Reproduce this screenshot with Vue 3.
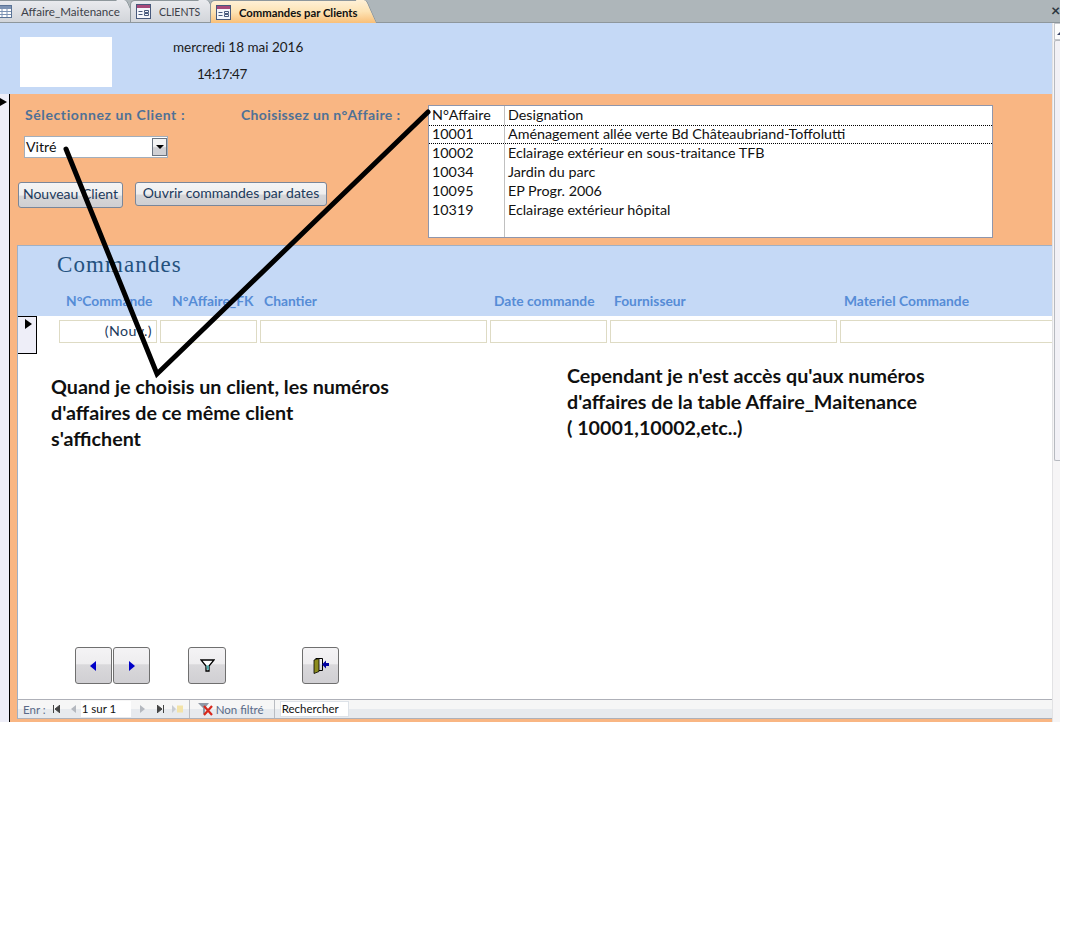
<template>
  <div class="window">
    <div class="tabs">
      <div v-for="tab in tabs" :key="tab.name" class="tab" :class="tab.cls">
        <svg v-if="tab.grid" class="tab-icon" width="15" height="13" viewBox="0 0 15 13">
          <rect x="0.5" y="0.5" width="14" height="12" fill="#fff" stroke="#5a7396" />
          <rect x="1" y="1" width="13" height="3" fill="#7d93b4" />
          <path d="M1 6.5h13M1 9.500h13M5 4v8M10 4v8" stroke="#7d93b4" fill="none" />
        </svg>
        <svg v-else class="tab-icon" width="15" height="15" viewBox="0 0 15 15">
          <rect x="0.5" y="0.5" width="14" height="14" fill="#f4f6fb" stroke="#47597c" />
          <rect x="1" y="1" width="13" height="3" fill="#a8497a" />
          <path d="M2.500 7.500h4M2.500 10.500h4" stroke="#47597c" fill="none" />
          <path d="M8.500 6.500h4v2h-4zM8.500 9.500h4v2h-4z" stroke="#47597c" fill="none" />
        </svg>
        <span>{{ tab.name }}</span>
      </div>
      <div class="tab-close">×</div>
    </div>

    <div class="body">
      <div class="content">
        <header class="page-head">
          <div class="logo"></div>
          <div class="stamp">
            <div class="stamp-date">mercredi 18 mai 2016</div>
            <div class="stamp-time">14:17:47</div>
          </div>
        </header>

        <div class="detail">
          <div class="record-strip"><span class="strip-arrow"></span></div>
          <div class="orange">
            <section class="filters">
              <div class="filters-left">
                <div class="field-labels">
                  <label class="field-label">Sélectionnez un Client :</label>
                </div>
                <div class="combo">
                  <span>Vitré</span>
                  <span class="combo-btn"><i></i></span>
                </div>
                <div class="actions">
                  <button class="btn btn-new">Nouveau Client</button>
                  <button class="btn btn-open">Ouvrir commandes par dates</button>
                </div>
              </div>
              <label class="field-label second">Choisissez un n°Affaire :</label>
              <div class="listbox">
                <div class="list-row">
                  <span class="col-num">N°Affaire</span>
                  <span>Designation</span>
                </div>
                <div
                  v-for="row in affaires"
                  :key="row.num"
                  class="list-row"
                  :class="{ selected: row.num === '10001' }"
                >
                  <span class="col-num">{{ row.num }}</span>
                  <span>{{ row.label }}</span>
                </div>
                <div class="list-fill"><span class="col-num"></span></div>
              </div>
            </section>

            <section class="subform">
              <div class="sub-head">
                <h2>Commandes</h2>
                <div class="sub-cols labels">
                  <span class="right pad-a">N°Commande</span>
                  <span class="right pad-b">N°Affaire_FK</span>
                  <span>Chantier</span>
                  <span>Date commande</span>
                  <span>Fournisseur</span>
                  <span>Materiel Commande</span>
                </div>
              </div>
              <div class="sub-row">
                <div class="selector"><span class="strip-arrow"></span></div>
                <div class="sub-cols cells">
                  <div class="cell new">(Nouv.)</div>
                  <div class="cell"></div>
                  <div class="cell"></div>
                  <div class="cell"></div>
                  <div class="cell"></div>
                  <div class="cell"></div>
                </div>
              </div>

              <div class="notes">
                <p class="note note-a">Quand je choisis un client, les numéros<br />d'affaires de ce même client<br />s'affichent</p>
                <p class="note note-b">Cependant je n'est accès qu'aux numéros<br />d'affaires de la table Affaire_Maitenance<br />( 10001,10002,etc..)</p>
              </div>

              <div class="tools">
                <button class="tool">
                  <svg width="7" height="10" viewBox="0 0 7 10"><path d="M6 0v10L0 5z" fill="#0000c8" /></svg>
                </button>
                <button class="tool">
                  <svg width="7" height="10" viewBox="0 0 7 10"><path d="M1 0v10l6-5z" fill="#0000c8" /></svg>
                </button>
                <button class="tool filter">
                  <svg width="15" height="13" viewBox="0 0 15 13">
                    <path d="M1 1h13L9 7v5H6V7z" fill="#fff" stroke="#000" stroke-width="1.300" />
                    <path d="M6 6.500h3V11H7.500z" fill="#4fa8a8" />
                  </svg>
                </button>
                <button class="tool exit">
                  <svg width="18" height="18" viewBox="0 0 18 18">
                    <path d="M3.500 1.500h7v12h-7" fill="none" stroke="#000" />
                    <path d="M2 3l5-1.500v13L2 16.500z" fill="#8c8c1e" stroke="#000" stroke-width="0.800" />
                    <path d="M17 6v3h-3v2.500L10 7.500l4-4V6z" fill="#0000a0" />
                  </svg>
                </button>
              </div>

              <div class="nav">
                <span class="nav-label">Enr :</span>
                <svg class="nav-ico first" width="7" height="8" viewBox="0 0 7 8"><path d="M0.500 0v8M7 0v8L2 4z" stroke="#444" stroke-width="1" fill="#444" /></svg>
                <svg class="nav-ico prev" width="5" height="8" viewBox="0 0 5 8"><path d="M5 0v8L0 4z" fill="#b4b8bf" /></svg>
                <span class="nav-input">1 sur 1</span>
                <svg class="nav-ico next" width="5" height="8" viewBox="0 0 5 8"><path d="M0 0v8l5-4z" fill="#b4b8bf" /></svg>
                <svg class="nav-ico last" width="7" height="8" viewBox="0 0 7 8"><path d="M0 0v8l5-4zM6.500 0v8" stroke="#444" stroke-width="1" fill="#444" /></svg>
                <svg class="nav-ico add" width="12" height="8" viewBox="0 0 12 8">
                  <path d="M0 0v8l4-4z" fill="#c8ccd2" />
                  <rect x="5" y="0.500" width="6" height="7" fill="#f3e3a8" />
                </svg>
                <span class="nav-sep"></span>
                <svg class="nav-filter" width="16" height="14" viewBox="0 0 16 14">
                  <path d="M0 1h11L7 6v6H5V6z" fill="#8f98a6" />
                  <path d="M6 4l8 9M14 4l-8 9" stroke="#d8281c" stroke-width="2.200" />
                </svg>
                <span class="nav-text">Non filtré</span>
                <span class="nav-sep"></span>
                <span class="nav-search">Rechercher</span>
              </div>
            </section>
          </div>
        </div>
      </div>
      <div class="scrollbar">
        <div class="scroll-up"><i></i></div>
        <div class="scroll-thumb"></div>
      </div>
    </div>

    <svg class="scribble" width="1068" height="722" viewBox="0 0 1068 722">
      <path d="M66 149 157 374 428 112" fill="none" stroke="#000" stroke-width="5" stroke-linecap="round" />
    </svg>
  </div>
</template>

<script setup>
const tabs = [
  { name: 'Affaire_Maitenance', cls: 'tab-grid', grid: true },
  { name: 'CLIENTS', cls: 'tab-clients' },
  { name: 'Commandes par Clients', cls: 'tab-active' },
]

const affaires = [
  { num: '10001', label: 'Aménagement allée verte Bd Châteaubriand-Toffolutti' },
  { num: '10002', label: 'Eclairage extérieur en sous-traitance TFB' },
  { num: '10034', label: 'Jardin du parc' },
  { num: '10095', label: 'EP Progr. 2006' },
  { num: '10319', label: 'Eclairage extérieur hôpital' },
]
</script>

<style scoped>
.window {
  position: relative;
  width: 1060px;
  height: 722px;
  display: flex;
  flex-direction: column;
  font-family: Lato, "Open Sans", sans-serif;
  font-size: 13px;
  color: #111;
  overflow: hidden;
}

.tabs {
  position: relative;
  flex: none;
  height: 23px;
  display: flex;
  background: #aeb6ba;
  border-bottom: 1px solid #8e979c;
  box-sizing: border-box;
}

.tab {
  position: relative;
  height: 22px;
  display: flex;
  align-items: center;
  box-sizing: border-box;
  color: #3c4048;
  font-size: 11.600px;
  white-space: nowrap;
  background: linear-gradient(#e9eaee, #d2d5da);
  border-top: 1px solid #8e979c;
  border-radius: 0 6px 0 0;
}

.tab::after {
  content: '';
  position: absolute;
  top: -1px;
  right: -6px;
  width: 10px;
  height: 22px;
  background: inherit;
  transform: skewX(24deg);
  border-radius: 0 3px 0 0;
  border-right: 1px solid #8e979c;
}

.tab span {
  position: relative;
  z-index: 2;
}

.tab-icon {
  position: relative;
  z-index: 2;
  flex: none;
}

.tab-grid {
  width: 126px;
}

.tab-grid .tab-icon {
  margin: 0 9px 0 -3px;
}

.tab-clients {
  width: 78px;
  margin-left: 4px;
  padding-left: 5px;
  z-index: 1;
  font-size: 10.500px;
  border-left: 1px solid #8e979c;
  border-radius: 5px 5px 0 0;
}

.tab-clients .tab-icon {
  margin-right: 8px;
}

.tab-active {
  width: 156px;
  height: 23px;
  margin-left: 2px;
  padding-left: 5px;
  z-index: 2;
  color: #101010;
  font-size: 11.300px;
  font-weight: 700;
  background: linear-gradient(#fff0d6 0, #fde3b4 50%, #f9bf78 100%);
  border-left: 1px solid #8e979c;
  border-radius: 5px 5px 0 0;
}

.tab-active::after {
  height: 23px;
}

.tab-active .tab-icon {
  margin-right: 8px;
}

.tab-close {
  position: absolute;
  right: 0;
  top: 1px;
  width: 9px;
  color: #2c3640;
  font-size: 16px;
  line-height: 18px;
  font-weight: 700;
}

.body {
  flex: 1;
  min-height: 0;
  display: flex;
}

.content {
  width: 1052px;
  display: flex;
  flex-direction: column;
}

.page-head {
  flex: none;
  height: 71px;
  display: flex;
  box-sizing: border-box;
  padding: 14px 0 0 20px;
  background: #c5d9f6;
}

.logo {
  width: 92px;
  height: 50px;
  background: #fff;
}

.stamp {
  margin-left: 61px;
  padding-top: 1px;
  font-size: 13.500px;
  line-height: 18px;
  color: #1c1c1c;
}

.stamp-time {
  margin: 9px 0 0 24px;
  letter-spacing: -0.500px;
}

.detail {
  flex: 1;
  min-height: 0;
  display: flex;
}

.record-strip {
  position: relative;
  flex: none;
  width: 9px;
  background: #eeeef8;
  border-right: 1px solid #000;
}

.record-strip .strip-arrow {
  position: absolute;
  left: 0;
  top: 4px;
  border-width: 4px 0 4px 7px;
}

.strip-arrow {
  display: block;
  width: 0;
  height: 0;
  border-style: solid;
  border-color: transparent transparent transparent #000;
  border-width: 5px 0 5px 7px;
}

.orange {
  flex: 1;
  min-width: 0;
  display: flex;
  flex-direction: column;
  background: #f9b683;
  padding-left: 7px;
}

.filters {
  position: relative;
  flex: none;
  height: 151px;
  display: flex;
}

.filters-left {
  width: 216px;
  flex: none;
  padding-top: 12px;
  box-sizing: border-box;
}

.field-labels {
  padding-left: 8px;
}

.field-label {
  font-size: 14px;
  line-height: 18px;
  font-weight: 700;
  color: #4f7196;
  white-space: nowrap;
  letter-spacing: 0.600px;
}

.field-label.second {
  margin: 12px 0 0 8px;
  width: 187px;
  flex: none;
  letter-spacing: 0.350px;
}

.combo {
  position: relative;
  width: 144px;
  height: 22px;
  margin: 12px 0 0 7px;
  box-sizing: border-box;
  border: 1px solid #a3aebb;
  background: #fff;
  padding-left: 1px;
  font-size: 14.200px;
  line-height: 20px;
}

.combo-btn {
  position: absolute;
  top: 1px;
  right: 0;
  width: 15px;
  height: 18px;
  box-sizing: border-box;
  border: 1px solid #6b7480;
  background: linear-gradient(#f4f4f4 45%, #d0d0d4 55%);
  display: flex;
  align-items: center;
  justify-content: center;
}

.combo-btn i {
  width: 0;
  height: 0;
  border-style: solid;
  border-width: 4px 4px 0 4px;
  border-color: #000 transparent transparent transparent;
}

.actions {
  display: flex;
  align-items: flex-start;
  gap: 12px;
  margin-top: 24px;
  white-space: nowrap;
  padding-left: 1px;
}

.btn {
  flex: none;
  height: 24px;
  padding: 0 0 3px;
  box-sizing: border-box;
  border: 1px solid #7a8699;
  border-radius: 3px;
  background: linear-gradient(#f4f4f5 0, #eeeeee 50%, #d6d6d8 55%, #cfcfd2 100%);
  font-family: inherit;
  font-size: 14px;
  color: #1c3a5c;
}

.btn-new {
  width: 105px;
  height: 26px;
}

.btn-open {
  width: 192px;
}

.listbox {
  flex: none;
  width: 565px;
  height: 133px;
  margin-top: 11px;
  box-sizing: border-box;
  border: 1px solid #8f96ac;
  background: #fff;
  display: flex;
  flex-direction: column;
  font-size: 14.300px;
}

.list-row {
  flex: none;
  height: 19px;
  display: flex;
  box-sizing: border-box;
  line-height: 18px;
  color: #111;
}

.list-row.selected {
  border-top: 1px dotted #000;
  border-bottom: 1px dotted #000;
  line-height: 16px;
}

.col-num {
  width: 76px;
  flex: none;
  box-sizing: border-box;
  padding-left: 3px;
  margin-right: 3px;
  border-right: 1px solid #c0c0c0;
}

.list-fill {
  flex: 1;
  display: flex;
}

.subform {
  flex: 1;
  min-height: 0;
  margin: 0 0 3px;
  display: flex;
  flex-direction: column;
  background: #fff;
  border-top: 1px solid #9fb0c6;
  border-left: 1px solid #9fb0c6;
  overflow: hidden;
}

.sub-head {
  flex: none;
  height: 70px;
  background: #c5d9f6;
}

.sub-head h2 {
  margin: 0;
  padding: 6px 0 0 39px;
  font-family: "Liberation Serif", serif;
  font-size: 23px;
  line-height: 26px;
  font-weight: 400;
  color: #24527f;
  letter-spacing: 1.100px;
}

.sub-cols {
  display: grid;
  grid-template-columns: 98px 97px 227px 117px 227px 1fr;
  column-gap: 3px;
}

.labels {
  margin: 14px 0 0 41px;
  font-size: 13.800px;
  line-height: 18px;
  font-weight: 700;
  color: #568cd6;
  white-space: nowrap;
}

.labels span {
  padding-left: 4px;
}

.labels .pad-a {
  padding-left: 7px;
}

.labels .pad-b {
  padding-left: 12px;
}

.sub-row {
  flex: none;
  display: flex;
  height: 38px;
}

.selector {
  flex: none;
  width: 19px;
  height: 38px;
  box-sizing: border-box;
  padding: 2px 0 0 7px;
  background: #eeeef8;
  border: 1px solid #000;
  border-left: 0;
}

.cells {
  flex: 1;
  margin: 4px -2px 0 22px;
  align-items: start;
}

.cell {
  height: 23px;
  box-sizing: border-box;
  border: 1px solid #dedbc4;
  background: #fff;
  font-size: 14.200px;
  line-height: 20px;
  padding-right: 4px;
  text-align: right;
  letter-spacing: 0.400px;
  color: #1c3a5c;
}

.notes {
  flex: 1;
  min-height: 0;
  display: flex;
  align-items: flex-start;
  padding-left: 33px;
}

.note {
  margin: 0;
  font-size: 19.700px;
  line-height: 26px;
  font-weight: 700;
  color: #101010;
  white-space: nowrap;
}

.note-a {
  width: 345px;
  margin-top: 20px;
}

.note-b {
  width: 365px;
  margin: 9px 0 0 171px;
}

.tools {
  flex: none;
  height: 52px;
  display: flex;
  padding-left: 57px;
}

.tool {
  flex: none;
  width: 37px;
  height: 37px;
  padding: 0;
  box-sizing: border-box;
  display: flex;
  align-items: center;
  justify-content: center;
  border: 1px solid #6f6f6f;
  border-radius: 3px;
  background: linear-gradient(#f4f3f5 0, #eeedef 45%, #d9d8db 48%, #d0cfd3 100%);
}

.tool + .tool {
  margin-left: 1px;
}

.tool.filter {
  width: 38px;
  margin-left: 38px;
}

.tool.exit {
  margin-left: 76px;
}

.nav {
  flex: none;
  height: 20px;
  display: flex;
  align-items: center;
  box-sizing: border-box;
  padding-left: 5px;
  border-top: 1px solid #aeb0b8;
  border-bottom: 1px solid #aeb0b8;
  background: linear-gradient(#f6f6f6 50%, #e7eaee 50%);
  font-size: 11.500px;
  color: #5a6a88;
}

.nav-ico {
  flex: none;
}

.nav-ico.first {
  margin-left: 7px;
}

.nav-ico.prev {
  margin-left: 11px;
}

.nav-input {
  width: 50px;
  height: 16px;
  margin-left: 5px;
  box-sizing: border-box;
  padding-left: 1px;
  background: #fff;
  color: #111;
  line-height: 16px;
}

.nav-ico.next {
  margin-left: 9px;
}

.nav-ico.last {
  margin-left: 12px;
}

.nav-ico.add {
  margin-left: 8px;
}

.nav-sep {
  width: 1px;
  height: 18px;
  margin-left: 5px;
  background: #b9bcc2;
}

.nav-filter {
  margin-left: 8px;
}

.nav-text {
  margin-left: 2px;
  width: 53px;
  white-space: nowrap;
}

.nav-search {
  width: 69px;
  height: 16px;
  margin-left: 5px;
  background: #fff;
  border: 1px solid #dde2e8;
  color: #111;
  padding-left: 1px;
  line-height: 14px;
  box-sizing: border-box;
}

.scrollbar {
  flex: none;
  width: 8px;
  position: relative;
  background: #f6f5f6;
  border-left: 1px solid #e2e2e4;
  box-sizing: border-box;
}

.scroll-up {
  height: 17px;
  margin-left: 1px;
  box-sizing: border-box;
  border: 1px solid #c5c8cc;
  border-right: 0;
  background: #fdfdfd;
  padding: 6px 0 0 2px;
}

.scroll-up i {
  display: block;
  width: 0;
  height: 0;
  border-style: solid;
  border-width: 0 5px 5px 5px;
  border-color: transparent transparent #3b4668 transparent;
}

.scroll-thumb {
  height: 421px;
  margin-left: 1px;
  box-sizing: border-box;
  border: 1px solid #b7bac0;
  border-right: 0;
  border-radius: 2px 0 0 2px;
  background: #f2f1f6;
}

.scribble {
  position: absolute;
  left: 0;
  top: 0;
  pointer-events: none;
}
</style>
